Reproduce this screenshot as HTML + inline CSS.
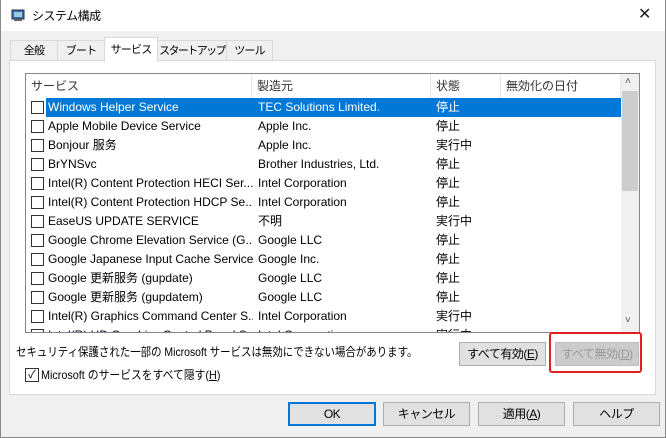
<!DOCTYPE html><html><head><style>
body{margin:0;width:666px;height:438px;overflow:hidden;background:#f0f0f0;font-family:"Liberation Sans","Noto Sans CJK JP",sans-serif;font-size:12px;color:#000;position:relative}
.a{position:absolute}
.title{left:0;top:0;width:666px;height:31px;background:#fff}
.tab{top:40px;height:20px;border:1px solid #d9d9d9;border-bottom:none;background:#f0f0f0;line-height:20px;text-align:center;font-size:11px;letter-spacing:-0.8px;white-space:nowrap;overflow:hidden}
.panel{left:9px;top:60px;width:645px;height:333px;background:#fff;border:1px solid #d9d9d9}
.list{left:25px;top:73px;width:613px;height:258px;border:1px solid #828790;background:#fff;overflow:hidden}
.hd{position:absolute;top:0;height:24px;line-height:24px;border-right:1px solid #e5e5e5;padding-left:5px;box-sizing:border-box;color:#333}
.row{position:absolute;left:0;width:595px;height:19px;line-height:19px;white-space:nowrap}
.row span{position:absolute}
.cb{position:absolute;left:5px;top:3px;width:11px;height:11px;border:1px solid #333;background:#fff}
.btn{position:absolute;height:22px;border:1px solid #adadad;background:#e1e1e1;text-align:center;line-height:22px;white-space:nowrap;letter-spacing:-0.5px}
.sq{transform:scaleX(0.87);transform-origin:0 0;white-space:nowrap}
</style></head><body>
<div class="a title"></div>
<div class="a" style="left:0;top:0;width:1px;height:438px;background:#888"></div>
<div class="a" style="left:665px;top:0;width:1px;height:438px;background:#888"></div>
<div class="a" style="left:0;top:437px;width:666px;height:1px;background:#888"></div>
<svg class="a" style="left:11px;top:9px" width="14" height="13"><rect x="1" y="1" width="12" height="9" fill="#3a6fb0" stroke="#234"/><rect x="3" y="3" width="8" height="5" fill="#9cd"/><rect x="3" y="10" width="8" height="2" fill="#666"/></svg>
<div class="a" style="left:32px;top:7px;font-size:12px;letter-spacing:-0.5px">システム構成</div>
<div class="a" style="left:638px;top:4px;font-size:16px;color:#222">✕</div>
<div class="a tab" style="left:10px;width:46px">全般</div>
<div class="a tab" style="left:57px;width:46px">ブート</div>
<div class="a tab" style="left:157px;width:68px;letter-spacing:-1.6px">スタートアップ</div>
<div class="a tab" style="left:226px;width:45px">ツール</div>
<div class="a panel"></div>
<div class="a tab" style="left:104px;top:37px;width:52px;height:24px;line-height:24px;background:#fff;z-index:2">サービス</div>
<div class="a list">
<div class="hd" style="left:0;width:226px">サービス</div>
<div class="hd" style="left:226px;width:179px">製造元</div>
<div class="hd" style="left:405px;width:70px">状態</div>
<div class="hd" style="left:475px;width:120px">無効化の日付</div>
<div class="a" style="left:595px;top:0;width:18px;height:258px;background:#f0f0f0"></div>
<div class="a" style="left:596px;top:17px;width:16px;height:100px;background:#cdcdcd"></div>
<div class="a" style="left:599px;top:2px;font-size:10px;color:#555">˄</div>
<div class="a" style="left:599px;top:241px;font-size:10px;color:#555">˅</div>
<div class="a" style="left:20px;top:24px;width:575px;height:19px;background:#0078d7"></div>
<div id="rows"></div>
</div>
<script>
var d=[["Windows Helper Service","TEC Solutions Limited.","停止"],["Apple Mobile Device Service","Apple Inc.","停止"],["Bonjour 服务","Apple Inc.","実行中"],["BrYNSvc","Brother Industries, Ltd.","停止"],["Intel(R) Content Protection HECI Ser...","Intel Corporation","停止"],["Intel(R) Content Protection HDCP Se...","Intel Corporation","停止"],["EaseUS UPDATE SERVICE","不明","実行中"],["Google Chrome Elevation Service (G...","Google LLC","停止"],["Google Japanese Input Cache Service","Google Inc.","停止"],["Google 更新服务 (gupdate)","Google LLC","停止"],["Google 更新服务 (gupdatem)","Google LLC","停止"],["Intel(R) Graphics Command Center S...","Intel Corporation","実行中"],["Intel(R) HD Graphics Control Panel S...","Intel Corporation","実行中"]];
var h="";d.forEach(function(r,i){var c=i==0?"color:#fff":"";h+='<div class="row" style="top:'+(24+i*19)+'px;'+c+'"><div class="cb"></div><span style="left:22px;width:205px;overflow:hidden">'+r[0]+'</span><span style="left:232px">'+r[1]+'</span><span style="left:410px">'+r[2]+'</span></div>';});
document.getElementById("rows").innerHTML=h;
</script>
<div class="a sq" style="left:16px;top:343px">セキュリティ保護された一部の Microsoft サービスは無効にできない場合があります。</div>
<div class="btn" style="left:459px;top:342px;width:85px">すべて有効(<u>E</u>)</div>
<div class="btn" style="left:555px;top:342px;width:82px;border-color:#bfbfbf;background:#ccc;color:#999">すべて無効(<u>D</u>)</div>
<div class="a" style="left:549px;top:332px;width:89px;height:37px;border:2px solid #e02020;border-radius:3px"></div>
<div class="a" style="left:25px;top:368px;width:12px;height:12px;border:1px solid #333;background:#fff;font-size:11px;line-height:12px;text-align:center">✓</div>
<div class="a sq" style="left:41px;top:366px;transform:scaleX(0.9)">Microsoft のサービスをすべて隠す(<u>H</u>)</div>
<div class="btn" style="left:288px;top:402px;width:84px;border:2px solid #0078d7;height:20px;line-height:20px">OK</div>
<div class="btn" style="left:383px;top:402px;width:85px">キャンセル</div>
<div class="btn" style="left:478px;top:402px;width:85px">適用(<u>A</u>)</div>
<div class="btn" style="left:573px;top:402px;width:85px">ヘルプ</div>
</body></html>
